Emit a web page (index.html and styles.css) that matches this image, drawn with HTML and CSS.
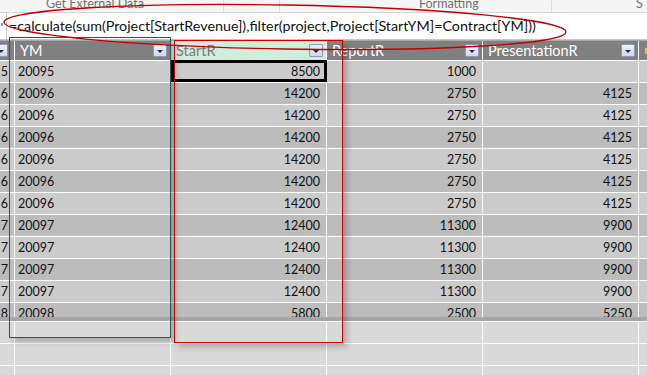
FILE: index.html
```html
<!DOCTYPE html>
<html>
<head>
<meta charset="utf-8">
<link rel="stylesheet" href="styles.css">
</head>
<body>
<div class="ribbon">
  <div class="grp g1"><span>Get External Data</span></div>
  <div class="grp g2"></div>
  <div class="grp g3"><span>Formatting</span></div>
  <div class="grp g4"><span>S</span></div>
</div>
<div class="fbar">
  <div class="fb-handle"></div>
  <div class="fbox">=calculate(sum(Project[StartRevenue]),filter(project,Project[StartYM]=Contract[YM]))</div>
</div>
<div class="sheet">
  <div class="table">
    <div class="row head">
      <div class="c h first"><span class="dd"></span></div>
      <div class="c h"><span class="ht">YM</span><span class="dd"></span></div>
      <div class="c h sel"><span class="ht">StartR</span><span class="dd"></span></div>
      <div class="c h"><span class="ht">ReportR</span><span class="dd"></span></div>
      <div class="c h"><span class="ht">PresentationR</span><span class="dd"></span></div>
      <div class="c h"><span class="mark"></span></div>
    </div>
    <div class="row odd"><div class="c n">5</div><div class="c t">20095</div><div class="c n cur">8500</div><div class="c n">1000</div><div class="c n"></div><div class="c"></div></div>
    <div class="row even"><div class="c n">6</div><div class="c t">20096</div><div class="c n">14200</div><div class="c n">2750</div><div class="c n">4125</div><div class="c"></div></div>
    <div class="row odd"><div class="c n">6</div><div class="c t">20096</div><div class="c n">14200</div><div class="c n">2750</div><div class="c n">4125</div><div class="c"></div></div>
    <div class="row even"><div class="c n">6</div><div class="c t">20096</div><div class="c n">14200</div><div class="c n">2750</div><div class="c n">4125</div><div class="c"></div></div>
    <div class="row odd"><div class="c n">6</div><div class="c t">20096</div><div class="c n">14200</div><div class="c n">2750</div><div class="c n">4125</div><div class="c"></div></div>
    <div class="row even"><div class="c n">6</div><div class="c t">20096</div><div class="c n">14200</div><div class="c n">2750</div><div class="c n">4125</div><div class="c"></div></div>
    <div class="row odd"><div class="c n">6</div><div class="c t">20096</div><div class="c n">14200</div><div class="c n">2750</div><div class="c n">4125</div><div class="c"></div></div>
    <div class="row even"><div class="c n">7</div><div class="c t">20097</div><div class="c n">12400</div><div class="c n">11300</div><div class="c n">9900</div><div class="c"></div></div>
    <div class="row odd"><div class="c n">7</div><div class="c t">20097</div><div class="c n">12400</div><div class="c n">11300</div><div class="c n">9900</div><div class="c"></div></div>
    <div class="row even"><div class="c n">7</div><div class="c t">20097</div><div class="c n">12400</div><div class="c n">11300</div><div class="c n">9900</div><div class="c"></div></div>
    <div class="row odd"><div class="c n">7</div><div class="c t">20097</div><div class="c n">12400</div><div class="c n">11300</div><div class="c n">9900</div><div class="c"></div></div>
    <div class="row even"><div class="c n">8</div><div class="c t">20098</div><div class="c n">5800</div><div class="c n">2500</div><div class="c n">5250</div><div class="c"></div></div>
  </div>
  <div class="band"></div>
  <div class="blank">
    <div class="row"><div class="c"></div><div class="c"></div><div class="c"></div><div class="c"></div><div class="c"></div><div class="c"></div></div>
    <div class="row"><div class="c"></div><div class="c"></div><div class="c"></div><div class="c"></div><div class="c"></div><div class="c"></div></div>
    <div class="row"><div class="c"></div><div class="c"></div><div class="c"></div><div class="c"></div><div class="c"></div><div class="c"></div></div>
  </div>
</div>
<div class="shape teal"></div>
<div class="shape red"></div>
<svg class="ellipse" width="647" height="60" viewBox="0 0 647 60">
  <ellipse cx="285" cy="27" rx="281" ry="22" transform="rotate(1 285 27)" fill="none" stroke="#c00000" stroke-width="1.4"/>
</svg>
</body>
</html>
```
FILE: styles.css
```css
html, body {
  margin: 0;
  padding: 0;
}
body {
  width: 647px;
  height: 375px;
  overflow: hidden;
  position: relative;
  background: #ffffff;
  font-family: Lato, "Liberation Sans", sans-serif;
}
.ribbon {
  height: 12px;
  display: flex;
  background: #f5f5f5;
  border-bottom: 1px solid #d4d4d4;
  overflow: hidden;
}
.grp {
  box-sizing: border-box;
  border-right: 1px solid #dcdcdc;
  font-size: 12.5px;
  line-height: 12px;
  color: #707070;
  white-space: nowrap;
  overflow: hidden;
}
.grp span {
  display: block;
  margin-top: -2px;
}
.g1 { width: 224px; padding-left: 46px; }
.g2 { width: 56px; }
.g3 { width: 272px; padding-left: 139px; }
.g4 { flex: 1; padding-left: 84px; border-right: none; }
.fbar {
  height: 26px;
  display: flex;
  background: #ffffff;
  border-bottom: 1px solid #c6c6c6;
}
.fb-handle {
  width: 6px;
  position: relative;
}
.fb-handle::after {
  content: "";
  position: absolute;
  left: 1px;
  top: 10px;
  width: 2px;
  height: 3px;
  background: #9a9a9a;
}
.fbox {
  flex: 1;
  border-left: 1px solid #c8c8c8;
  padding-left: 2px;
  font-size: 14.3px;
  line-height: 26px;
  color: #111111;
  white-space: nowrap;
  overflow: hidden;
}
.sheet {
  border-top: 1px solid #a9a9a9;
  background: #ffffff;
}
.table {
  height: 276px;
  overflow: hidden;
}
.row {
  display: grid;
  grid-template-columns: 14px 155px 155px 155px 155px 1fr;
  column-gap: 1px;
  height: 21px;
  margin-bottom: 1px;
  font-size: 12.5px;
  line-height: 21px;
  color: #111111;
}
.c {
  position: relative;
  white-space: nowrap;
  overflow: visible;
}
.head {
  height: 19px;
  line-height: 19px;
  font-size: 14.5px;
}
.head .c {
  background: #808080;
  display: flex;
  align-items: center;
  justify-content: space-between;
  color: #ffffff;
  overflow: hidden;
}
.head .c.first { justify-content: flex-end; }
.head .c.sel {
  background: #d1eedc;
  color: #7a7a7a;
}
.ht { padding-left: 5px; }
.dd {
  width: 14px;
  height: 13px;
  box-sizing: border-box;
  margin-right: 3px;
  border: 1px solid #8f97b6;
  border-radius: 1px;
  background: linear-gradient(#eef0f6, #d3d8e6);
  position: relative;
  flex: none;
}
.dd::after {
  content: "";
  position: absolute;
  left: 3px;
  top: 5px;
  border-left: 3px solid transparent;
  border-right: 3px solid transparent;
  border-top: 3px solid #1f2a52;
}
.head .c.first .dd { margin-right: 6px; }
.mark {
  width: 3px;
  height: 6px;
  margin-left: 6px;
  background: #f2b860;
}
.odd .c { background: #cbcbcb; }
.even .c { background: #bcbcbc; }
.n { text-align: right; padding-right: 6px; }
.t { padding-left: 3px; }
.cur::after {
  content: "";
  position: absolute;
  left: 0;
  top: -1px;
  right: -1px;
  bottom: 0;
  border: 3px solid #000000;
}
.band {
  height: 4px;
  background: #a6a6a6;
}
.blank .row {
  margin-bottom: 0;
  margin-top: 1px;
}
.blank .c { background: #d9d9d9; }
.shape {
  position: absolute;
  box-sizing: border-box;
  box-shadow: 4px 4px 6px rgba(0, 0, 0, 0.22);
}
.teal {
  left: 9px;
  top: 37px;
  width: 162px;
  height: 301px;
  border: 1.5px solid #1d5c62;
}
.red {
  left: 174px;
  top: 40px;
  width: 169px;
  height: 303px;
  border: 1.5px solid #cc0000;
}
.ellipse {
  position: absolute;
  left: 0;
  top: 0;
}
```
